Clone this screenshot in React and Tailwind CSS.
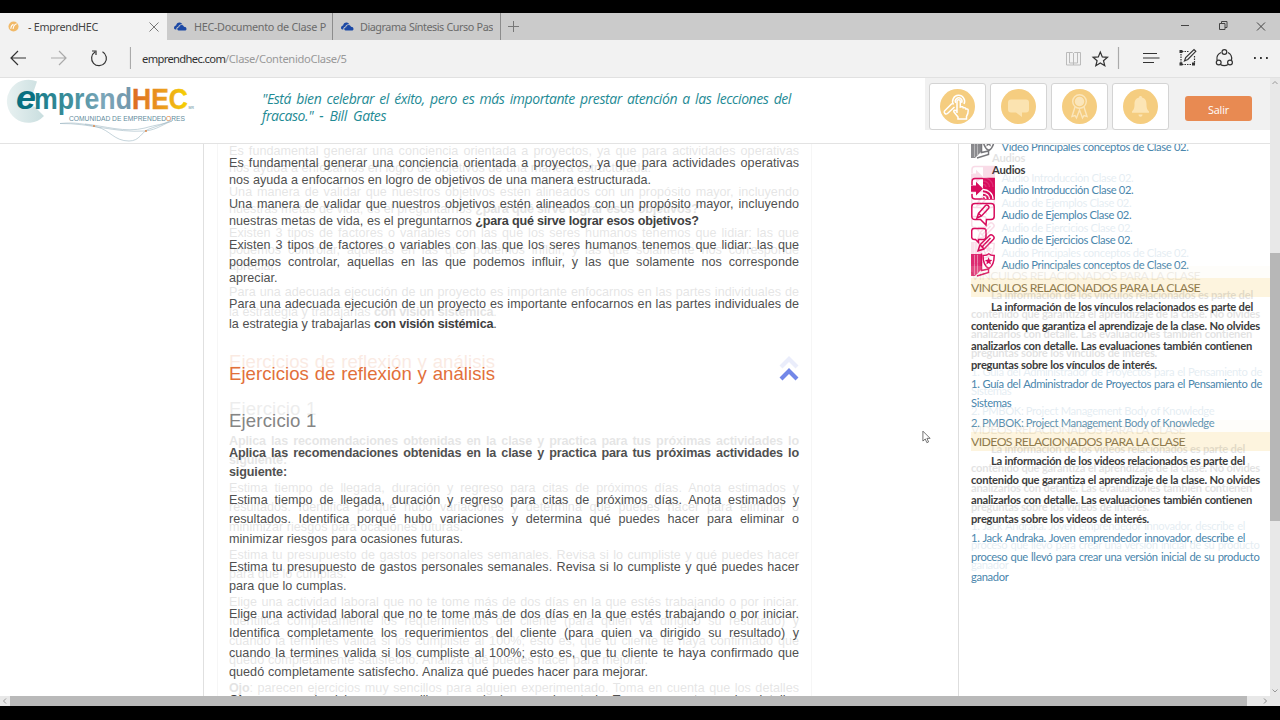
import React from "react";
import clsx from "clsx";

const COLUMN = 570;

// Lesson text. Every line carries its own width, so the column stays justified.
const intro = [
  {
    style: "mt-[11px] leading-[16.5px]",
    lines: [
      ["Es fundamental generar una conciencia orientada a proyectos, ya que para actividades operativas", COLUMN],
      ["nos ayuda a enfocarnos en logro de objetivos de una manera estructurada.", 422],
    ],
  },
  {
    style: "mt-[8px] leading-[16.5px]",
    lines: [
      ["Una manera de validar que nuestros objetivos estén alineados con un propósito mayor, incluyendo", COLUMN],
      [<>nuestras metas de vida, es el preguntarnos <b>¿para qué sirve lograr esos objetivos?</b></>, 469],
    ],
  },
  {
    style: "mt-[8px] leading-[16.5px]",
    lines: [
      ["Existen 3 tipos de factores o variables con las que los seres humanos tenemos que lidiar: las que", COLUMN],
      ["podemos controlar, aquellas en las que podemos influir, y las que solamente nos corresponde", COLUMN],
      ["apreciar.", 50],
    ],
  },
  {
    style: "mt-[8.5px] leading-[19.5px]",
    lines: [
      ["Para una adecuada ejecución de un proyecto es importante enfocarnos en las partes individuales de", COLUMN],
      [<>la estrategia y trabajarlas <b>con visión sistémica</b>.</>, 267],
    ],
  },
];

const exercises = [
  {
    style: "mt-[10.5px] leading-[19.2px] font-bold tracking-[-0.15px]",
    lines: [
      ["Aplica las recomendaciones obtenidas en la clase y practica para tus próximas actividades lo", COLUMN],
      ["siguiente:", 57],
    ],
  },
  {
    style: "mt-[8.8px] leading-[19.2px]",
    lines: [
      ["Estima tiempo de llegada, duración y regreso para citas de próximos días. Anota estimados y", COLUMN],
      ["resultados. Identifica porqué hubo variaciones y determina qué puedes hacer para eliminar o", COLUMN],
      ["minimizar riesgos para ocasiones futuras.", 234],
    ],
  },
  {
    style: "mt-[9px] leading-[19.2px]",
    lines: [
      ["Estima tu presupuesto de gastos personales semanales. Revisa si lo cumpliste y qué puedes hacer", COLUMN],
      ["para que lo cumplas.", 117],
    ],
  },
  {
    style: "mt-[8.7px] leading-[19.3px]",
    lines: [
      ["Elige una actividad laboral que no te tome más de dos días en la que estés trabajando o por iniciar.", COLUMN],
      ["Identifica completamente los requerimientos del cliente (para quien va dirigido su resultado) y", COLUMN],
      ["cuando la termines valida si los cumpliste al 100%; esto es, que tu cliente te haya confirmado que", COLUMN],
      ["quedó completamente satisfecho. Analiza qué puedes hacer para mejorar.", 419],
    ],
  },
  {
    style: "mt-[8.5px] leading-[19.3px]",
    lines: [
      [<><b>Ojo</b>: parecen ejercicios muy sencillos para alguien experimentado. Toma en cuenta que los detalles</>, COLUMN],
    ],
  },
];

function Line({ width, className, children }) {
  return (
    <div
      className={clsx("whitespace-nowrap [text-align:justify] [text-align-last:justify] [&_b]:tracking-[-0.2px]", className)}
      style={{ width }}
    >
      {children}
    </div>
  );
}

function Paragraph({ style, lines }) {
  return (
    <div className={style}>
      {lines.map(([text, width], i) => (
        <Line key={i} width={width}>
          {text}
        </Line>
      ))}
    </div>
  );
}

function Lesson() {
  return (
    <article className="w-[609px] pl-[25px] font-['Liberation_Sans'] text-[12.6px] tracking-[0.03px] text-[#505050] [&_b]:text-[#404040]">
      {intro.map((p, i) => (
        <Paragraph key={i} {...p} />
      ))}
      <div className="mt-[27px] flex w-[570px] items-center justify-between text-[#e2703a]">
        <Line width={266} className="text-[18.6px] leading-[26px]">
          Ejercicios de reflexión y análisis
        </Line>
        <svg viewBox="0 0 20 14" className="h-[14px] w-5" fill="none" stroke="#7287e8" strokeWidth="4.2">
          <path d="M2 12 10 4 18 12" />
        </svg>
      </div>
      <h3 className="mt-[20.5px] text-[18.6px] leading-[26px] tracking-[0.15px] text-[#858585]">Ejercicio 1</h3>
      {exercises.map((p, i) => (
        <Paragraph key={i} {...p} />
      ))}
    </article>
  );
}

function BookIcon({ color }) {
  return (
    <svg viewBox="0 0 24 25" className="h-[25px] w-6 shrink-0" fill="none" stroke={color} strokeWidth="1.5">
      <path d="M0 2h10v16L4 24H0z" fill={color} stroke="none" opacity=".85" />
      <path d="M3.5 3v20M6.5 3v18" stroke="#fff" strokeWidth=".4" />
      <path d="M10.500 1.500v17l7-1.500v3.500L6 24" />
      <path d="M12 3.500c3 0 4.500-.5 5.800-1.700 1.300 1.200 2.700 1.700 5.400 1.700 0 6-.8 10.500-5.400 13C13 14 12 9.500 12 3.500z" fill="#fff" />
      <path d="m17.600 5.200 1.100 2.500 2.700.2-2.100 1.800.7 2.700-2.400-1.400-2.300 1.400.6-2.700-2-1.800 2.700-.2z" fill={color} stroke="none" />
    </svg>
  );
}

function IntroIcon() {
  return (
    <svg viewBox="0 0 24 25" className="h-[25px] w-6 shrink-0" fill="none" stroke="#d80b5c" strokeWidth="1.5">
      <path d="M1 8V4.500C1 2.500 2 1.500 4 1.500h19.200V22H4c-2 0-3-1-3-3v-2" />
      <path d="M12 1.500h11.200V22H12z" fill="#d80b5c" stroke="none" />
      <path d="M0 8.500h5V4.800l7 7-7 6.700v-3.800H0z" fill="#d80b5c" stroke="none" />
      <path d="M12 12.500c5.500 0 10 4 10 9.500M12 16c3.500 0 6.500 2.500 6.500 6M12 19.300c1.800 0 3 1.200 3 2.700" stroke="#fff" strokeWidth="1.3" />
    </svg>
  );
}

function ExampleIcon() {
  return (
    <svg viewBox="0 0 24 25" className="h-[25px] w-6 shrink-0" fill="none" stroke="#d80b5c" strokeWidth="1.5">
      <path d="M4 1.500h16c2 0 3.200 1 3.200 3v10c0 2-1.200 3-3.200 3h-4.500L15 23l-5.500-5.500H4c-2 0-3.200-1-3.200-3v-10c0-2 1.200-3 3.200-3z" />
      <path d="m6 16 1.500-4.500L14.500 3.500c1.500-1.500 4.500 1 3.200 2.800L10.500 14z" fill="#fff" />
      <path d="m7.500 11.500 3 2.500" />
    </svg>
  );
}

function ExerciseIcon() {
  return (
    <svg viewBox="0 0 24 25" className="h-[25px] w-6 shrink-0" fill="none" stroke="#d80b5c" strokeWidth="1.5">
      <path d="M3 1.500h9.500c1.500 0 2.500 1 2.500 2.500v6c0 1.500-1 2.500-2.500 2.500h-5L7.500 15.500l-3-3H3c-1.500 0-2.300-1-2.300-2.500V4c0-1.500.8-2.500 2.300-2.500z" />
      <path d="m7 23.800 2-6L18.500 8.500c2-2 6 1.500 4 3.800L13 22z" fill="#fff" />
      <path d="m9 17.800 4 4.200M11.500 19.500l8-8.500" />
    </svg>
  );
}

const audios = [
  { label: "Audio Introducción Clase 02.", width: 131.5, icon: <IntroIcon /> },
  { label: "Audio de Ejemplos Clase 02.", width: 129, icon: <ExampleIcon /> },
  { label: "Audio de Ejercicios Clase 02.", width: 130, icon: <ExerciseIcon /> },
  { label: "Audio Principales conceptos de Clase 02.", width: 187, icon: <BookIcon color="#d80b5c" /> },
];

const related = [
  {
    title: ["VINCULOS RELACIONADOS PARA LA CLASE", 229],
    note: [
      ["La información de los vínculos relacionados es parte del", 262],
      ["contenido que garantiza el aprendizaje de la clase. No olvides", 289],
      ["analizarlos con detalle. Las evaluaciones también contienen", 281],
      ["preguntas sobre los vínculos de interés.", 186],
    ],
    links: [
      ["1. Guía del Administrador de Proyectos para el Pensamiento de", 291],
      ["Sistemas", 41],
      ["2. PMBOK: Project Management Body of Knowledge", 240.5],
    ],
  },
  {
    title: ["VIDEOS RELACIONADOS PARA LA CLASE", 214],
    note: [
      ["La información de los videos relacionados es parte del", 254],
      ["contenido que garantiza el aprendizaje de la clase. No olvides", 289],
      ["analizarlos con detalle. Las evaluaciones también contienen", 281],
      ["preguntas sobre los videos de interés.", 178],
    ],
    links: [
      ["1. Jack Andraka. Joven emprendedor innovador, describe el", 274],
      ["proceso que llevó para crear una versión inicial de su producto", 288.5],
      ["ganador", 38],
    ],
  },
];

function Resource({ icon, label, width }) {
  return (
    <div className="flex h-[25px] items-center gap-[6.5px] leading-[25px] tracking-[-0.34px] text-[#4a86ac]">
      {icon}
      <Line width={width}>{label}</Line>
    </div>
  );
}

function Sidebar() {
  return (
    <aside className="-mt-[10.5px] w-[311px] shrink-0 pl-[12px] font-['Lato'] text-[11.2px]">
      <Resource icon={<BookIcon color="#77777b" />} label="Video Principales conceptos de Clase 02." width={187} />
      <div className="h-[18.5px] pl-[21px] pt-px leading-[20px] font-bold tracking-[-0.2px] text-[#3c3c3c]">Audios</div>
      {audios.map((a) => (
        <Resource key={a.label} {...a} />
      ))}
      {related.map(({ title, note, links }, n) => (
        <section key={title[0]} className={clsx("leading-[19.25px]", n === 0 && "mt-[0.8px]")}>
          <div className="bg-[#fdf4de] text-[12.3px] tracking-[-0.6px] text-[#8f7a4c]">
            <Line width={title[1]}>{title[0]}</Line>
          </div>
          <div className="font-bold tracking-[-0.24px] text-[#3c3c3c]">
            {note.map(([text, width], i) => (
              <Line key={text} width={width} className={i === 0 ? "ml-5" : ""}>
                {text}
              </Line>
            ))}
          </div>
          <div className="tracking-[-0.35px] text-[#4a86ac]">
            {links.map(([text, width]) => (
              <Line key={text} width={width}>
                {text}
              </Line>
            ))}
          </div>
        </section>
      ))}
    </aside>
  );
}

function CloudIcon() {
  return (
    <svg viewBox="0 0 15 10" className="h-[9px] w-[14px] shrink-0" fill="#1b48a5">
      <path d="M1 7.500C.4 5.500 1.700 4 3.200 4 3.500 1.500 5.200.3 7.200.5 8.800.7 9.700 1.500 10.200 2.700 7.800 2.200 6 3.500 5.600 5.300 3.700 5.500 3.300 6.800 3.500 8.200 2.300 8.500 1.400 8.300 1 7.500z" />
      <path d="M4.600 8.200c-.4-1.400.6-2.500 2-2.400C6.900 3.800 8.200 3 9.700 3.300c1.300.2 2 1.100 2.200 2.100 1.800 0 2.800 1 2.800 2.300 0 1.100-.8 1.800-2 1.800H6.500c-1 0-1.700-.5-1.900-1.300z" />
    </svg>
  );
}

function TabBar() {
  return (
    <div className="flex h-[27px] shrink-0 bg-[#cbcbcb] font-['Noto_Sans'] text-[10.8px] leading-[27px] tracking-[-0.3px] text-[#6a6a6a]">
      <div className="flex w-[167px] items-center bg-[#f2f2f2] pl-[8px] text-[#444]">
        <svg viewBox="0 0 12 12" className="size-[11px] shrink-0">
          <circle cx="6" cy="6" r="5.500" fill="#f1b968" />
          <path d="M3 8.500C3.500 5 4.500 4 6 4M5.500 8.500C6 5.500 7.500 3.500 9.500 3" stroke="#fff" strokeWidth="1.2" fill="none" />
        </svg>
        <Line width={70} className="ml-[9px]">- EmprendHEC</Line>
        <svg viewBox="0 0 10 10" className="ml-[51px] size-[10px]" stroke="#777" strokeWidth="1">
          <path d="m.5.5 9 9m0-9-9 9" />
        </svg>
      </div>
      <div className="flex w-[166px] items-center border-r border-[#8c8c8c] pl-[6px]">
        <CloudIcon />
        <Line width={132} className="ml-[7px]">HEC-Documento de Clase P</Line>
      </div>
      <div className="flex w-[168px] items-center border-r border-[#8c8c8c] pl-[7px]">
        <CloudIcon />
        <Line width={133} className="ml-[6px] overflow-hidden tracking-[-0.45px]">Diagrama Síntesis Curso Pas</Line>
      </div>
      <div className="flex flex-1 items-center pl-[7px]">
        <svg viewBox="0 0 11 11" className="size-[11px]" stroke="#777" strokeWidth="1">
          <path d="M5.500 0v11M0 5.500h11" />
        </svg>
      </div>
      <svg viewBox="0 0 100 27" className="w-[100px]" fill="none" stroke="#444" strokeWidth="1">
        <path d="M1 12.500h8M39.500 10.500h5.500v6h-5.500zM41.500 10.500v-2h5.500v6h-2M77 9.500l8 8m0-8-8 8" />
      </svg>
    </div>
  );
}

function Toolbar() {
  return (
    <div className="flex h-[38px] shrink-0 items-center border-b border-[#e1e1e1] bg-[#f2f2f2]">
      <svg viewBox="0 0 131 37" className="w-[131px] shrink-0" fill="none" stroke="#333" strokeWidth="1.2">
        <path d="M26 18H11m7-7-7 7 7 7" />
        <path d="M51 18h15m-7-7 7 7-7 7" stroke="#aaa" />
        <path d="M102.500 11.800a7.400 7.400 0 1 1-7.500.3M92 11h4v4" />
        <path d="M130.500 7v22" stroke="#aaa" />
      </svg>
      <div className="ml-[11px] flex pt-[2px] font-['Noto_Sans'] text-[11.2px] text-[#999]">
        <span className="w-[83px] tracking-[-0.65px] text-[#333]">emprendhec.com</span>
        <span className="tracking-[-0.33px]">/Clase/ContenidoClase/5</span>
      </div>
      <svg viewBox="0 0 220 37" className="ml-auto w-[220px]" fill="none" stroke="#333" strokeWidth="1.2">
        <path d="M6.500 12.500h6l1 1 1-1h6V25h-14zM13.500 13v12M9.500 12.500V23h4M17.500 12.500V23h-4" stroke="#bbb" strokeWidth="1" />
        <path d="m40.300 12 2 4.900 5.200.4-4 3.400 1.300 5.100-4.500-2.800-4.500 2.800 1.300-5.100-4-3.400 5.200-.4z" />
        <path d="M58.500 7v22" stroke="#aaa" />
        <path d="M83 13.500h14M83 18h16.500M83 22.500h11" />
        <path d="M122 11.500h7M121 14v9M122 24.500h12M134.500 16v8" strokeDasharray="1.5 1" />
        <path d="M119.500 10h3v3h-3zM119.500 22.500h3v3h-3zM132 22.500h3v3h-3z" fill="#333" stroke="none" />
        <path d="m124.500 21 1.200-3.500 8.300-8 1.800 1.800-8 8.200z" />
        <path d="M161 12.500a7 7 0 0 0-4 7.500M168 12.500a7 7 0 0 1 3.500 7.500M160.500 24.500c2 1.500 5.500 1.500 7.500 0" />
        <circle cx="164.400" cy="12" r="2.400" />
        <circle cx="158.700" cy="22.500" r="2.400" />
        <circle cx="170" cy="22.500" r="2.400" />
        <path d="M194 18h1.800M200 18h1.800M206 18h1.800" strokeWidth="1.8" />
      </svg>
    </div>
  );
}

function Logo() {
  return (
    <svg viewBox="0 0 200 65" className="h-[65px] w-[200px] shrink-0">
      <defs>
        <linearGradient id="blue" x1="0" x2="1">
          <stop offset="0" stopColor="#177b89" />
          <stop offset=".35" stopColor="#3a8d9a" />
          <stop offset=".7" stopColor="#7ba6b9" />
          <stop offset="1" stopColor="#7397ac" />
        </linearGradient>
        <linearGradient id="orange" x1="0" x2="1">
          <stop offset="0" stopColor="#dc6a23" />
          <stop offset=".6" stopColor="#eda11d" />
          <stop offset="1" stopColor="#f6d400" />
        </linearGradient>
        <linearGradient id="disc" x1="0" x2="1">
          <stop offset="0" stopColor="#e8f1f1" />
          <stop offset="1" stopColor="#c9dedf" />
        </linearGradient>
      </defs>
      <path d="M37 3.500A21.500 21.500 0 1 0 44 38L30 24z" fill="url(#disc)" />
      <circle cx="28" cy="22" r="9" fill="#fff" opacity=".5" />
      <g fontFamily="Liberation Sans" fontWeight="bold">
        <text x="16" y="31" fontSize="34" fontStyle="italic" textLength="20" lengthAdjust="spacingAndGlyphs" fill="#087080">e</text>
        <text x="34" y="31" fontSize="29.5" textLength="98" lengthAdjust="spacingAndGlyphs" fill="url(#blue)">mprend</text>
        <text x="132" y="31" fontSize="30" textLength="56" lengthAdjust="spacingAndGlyphs" fill="url(#orange)" stroke="url(#orange)" strokeWidth=".4">HEC</text>
      </g>
      <g fontFamily="Liberation Sans" fill="#5f8c9c">
        <text x="69" y="43" fontSize="6.8" textLength="116" lengthAdjust="spacingAndGlyphs">
          COMUNIDAD DE EMPRENDED<tspan fill="#e2803a">O</tspan>RES
        </text>
        <text x="188.5" y="31" fontSize="3.5">MR</text>
      </g>
      <g fill="none" stroke="#9db7c2" strokeWidth=".6">
        <path d="M60 45.500C75 44 85 46 97 49 110 52 114 63 129 63 140 63 141 54 149 51 157 48 165 46 171 42" />
        <path d="M60 45.500C90 45 115 55 145 53 157 52 165 45 172 43" />
        <path d="M85 46C105 48 125 55 145 50 155 47 165 46 172 43" />
      </g>
      <circle cx="94" cy="48" r=".9" fill="#e2803a" />
      <circle cx="146" cy="53" r=".9" fill="#e2803a" />
    </svg>
  );
}

const shortcuts = [
  <g key="touch" fill="none" stroke="#fff" strokeWidth="1.5">
    <path d="M13.500 15.500A6 6 0 1 1 24 15M12 14.500 4.500 22c-1 1.500 1 4 3 2.500l7-6.500" />
    <path d="M17 24V12.500c0-2.500 3.300-2.500 3.300 0V18c2-.8 3 0 3 .8 1.500-.5 2.700.2 2.700 1.200 1.500-.3 2.200.3 2.200 1.500 0 3.500-.7 4.500-1.700 6v2.500h-8.500V28L14 23c-1-1.800 1.200-2.500 3-.5z" fill="#f5cd80" />
    <path d="M15.800 13.800a3.300 3.300 0 1 1 5.700 0" />
  </g>,
  <path key="chat" d="M10 10.500h15c2 0 3 1 3 3v7c0 2-1 3-3 3h-4v4.500l-6-4.500h-5c-2 0-3-1-3-3v-7c0-2 1-3 3-3z" fill="#fbe3b0" />,
  <g key="award" fill="none" stroke="#fbe6bb" strokeWidth="1.4">
    <circle cx="17.500" cy="12.500" r="6.800" />
    <circle cx="17.500" cy="12.500" r="4" fill="#fbe6bb" />
    <path d="m13 18-3 9.500 3-1 1.500 2.500 3-8 3 8 1.500-2.500 3 1L22 18" />
  </g>,
  <path key="bell" d="M17.500 7c1 0 1.500.7 1.500 1.500 3.500.8 4.500 3.500 4.500 7 0 4 .8 5 2.500 7v1.300H9V22.500c1.700-2 2.500-3 2.500-7 0-3.500 1-6.200 4.500-7C16 7.700 16.500 7 17.500 7zM15.500 25.500h4c0 3-4 3-4 0z" fill="#fce5b5" />,
];

function Header() {
  return (
    <header className="flex h-[66px] shrink-0 border-b border-[#e3e3e3] bg-white">
      <Logo />
      <div className="ml-[62px] pt-[12px] font-['Open_Sans'] text-[14px] leading-[17px] tracking-[-0.42px] text-[#1f8b95] italic">
        <Line width={529}>"Está bien celebrar el éxito, pero es más importante prestar atención a las lecciones del</Line>
        <Line width={124}>fracaso." - Bill Gates</Line>
      </div>
      <div className="ml-auto flex h-[52px] w-[345px] items-start bg-[#f1f1f1] pt-[5px] pl-[4px]">
        <div className="flex gap-[4px]">
          {shortcuts.map((icon) => (
            <button key={icon.key} className="flex h-[47px] w-[57px] items-center justify-center rounded-[3px] border border-[#d4d4d4] bg-white">
              <svg viewBox="0 0 35 35" className="size-[35px]">
                <circle cx="17.500" cy="17.500" r="17.500" fill="#f5cd80" />
                {icon}
              </svg>
            </button>
          ))}
        </div>
        <button className="mt-[13px] ml-[16px] h-[25px] w-[67px] rounded-[3px] bg-[#e88a52] pt-[3px] font-['Open_Sans'] text-[10.8px] tracking-[-0.2px] text-white">
          Salir
        </button>
      </div>
    </header>
  );
}

function VerticalScrollbar() {
  return (
    <div className="flex w-[10px] shrink-0 flex-col items-center bg-[#e8e8e8]">
      <svg viewBox="0 0 10 10" className="h-[10px] w-[10px]" fill="none" stroke="#999">
        <path d="m2.500 6 2.500-2.500L7.500 6" />
      </svg>
      <div className="mt-[165px] h-[268px] w-full bg-[#b7b7b7]" />
      <svg viewBox="0 0 10 10" className="mt-auto h-[10px] w-[10px]" fill="none" stroke="#999">
        <path d="m2.500 3.500 2.500 2.500 2.500-2.500" />
      </svg>
    </div>
  );
}

function HorizontalScrollbar() {
  return (
    <div className="flex h-[10px] shrink-0 bg-[#e8e8e8]">
      <svg viewBox="0 0 10 10" className="w-[10px]" fill="none" stroke="#999">
        <path d="M6 2.500 3.500 5 6 7.500" />
      </svg>
      <div className="w-[1237px] bg-[#b9b9b9]" />
      <svg viewBox="0 0 10 10" className="ml-[13px] w-[10px]" fill="none" stroke="#888">
        <path d="M4 2.500 6.500 5 4 7.500" />
      </svg>
    </div>
  );
}

function Content() {
  return (
    <div className="flex">
      <div className="w-[204px] shrink-0" />
      <Lesson />
      <div className="w-[146px] shrink-0" />
      <Sidebar />
    </div>
  );
}

export default function App() {
  return (
    <div className="flex h-[720px] w-[1280px] flex-col overflow-hidden bg-black pt-[13px] pb-[14px]">
      <TabBar />
      <Toolbar />
      <div className="flex min-h-0 flex-1 bg-white">
        <div className="flex w-[1270px] flex-col">
          <Header />
          <main className="relative flex-1 overflow-hidden">
            {/* Column rules */}
            <div className="absolute inset-0 flex">
              <div className="w-[204px] border-r border-[#e0e0e0]" />
              <div className="ml-[13px] w-[595px] border-x border-[#f6f6f6]" />
              <div className="w-[147px] border-r border-[#dedede]" />
            </div>
            <div className="absolute inset-x-0 top-0">
              <Content />
            </div>
            {/* Scroll trail, one step above the page */}
            <div className="absolute inset-x-0 -top-3 opacity-[0.14]" aria-hidden="true">
              <Content />
            </div>
            <svg viewBox="0 0 10 15" className="absolute top-[286px] left-[922px] h-[14px] w-[9px]" fill="#fff" stroke="#555" strokeWidth=".9">
              <path d="M1 1v11l2.600-2.300 1.800 4.100 1.900-.8-1.800-4H9z" />
            </svg>
          </main>
        </div>
        <VerticalScrollbar />
      </div>
      <HorizontalScrollbar />
    </div>
  );
}
